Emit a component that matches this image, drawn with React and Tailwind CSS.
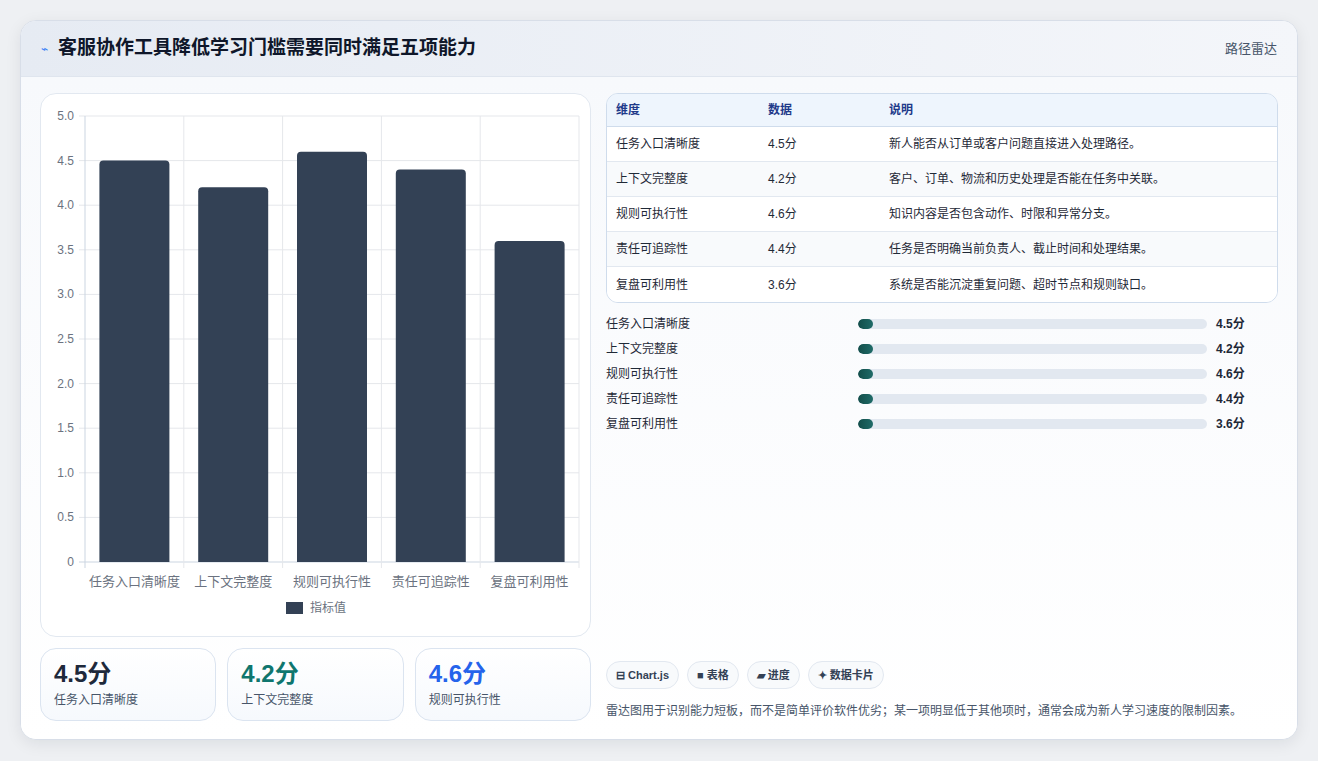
import React from "react";

const cats = ["任务入口清晰度", "上下文完整度", "规则可执行性", "责任可追踪性", "复盘可利用性"];
const vals = [4.5, 4.2, 4.6, 4.4, 3.6];
const descs = [
  "新人能否从订单或客户问题直接进入处理路径。",
  "客户、订单、物流和历史处理是否能在任务中关联。",
  "知识内容是否包含动作、时限和异常分支。",
  "任务是否明确当前负责人、截止时间和处理结果。",
  "系统是否能沉淀重复问题、超时节点和规则缺口。",
];

function Chart() {
  const L = 44, R = 538, T = 22, B = 468;
  const cw = (R - L) / 5;
  const ticks = [0, 0.5, 1, 1.5, 2, 2.5, 3, 3.5, 4, 4.5, 5];
  const y = (v) => B - (v / 5) * (B - T);
  return (
    <svg width="550" height="541" style={{ fontFamily: '"Liberation Sans","Noto Sans CJK SC",sans-serif' }}>
      {ticks.map((t) => (
        <g key={t}>
          <line x1={L - 6} x2={R} y1={y(t)} y2={y(t)} stroke={t === 0 ? "#cbd5e1" : "#e5e7eb"} />
          <text x={L - 11} y={y(t) + 4} textAnchor="end" fontSize="12" fill="#6b7280">
            {t === 0 ? "0" : t.toFixed(1)}
          </text>
        </g>
      ))}
      {[0, 1, 2, 3, 4, 5].map((i) => (
        <line key={i} x1={L + i * cw} x2={L + i * cw} y1={T} y2={B + 6} stroke={i === 0 ? "#cbd5e1" : "#e5e7eb"} />
      ))}
      {vals.map((v, i) => {
        const cx = L + cw * i + cw / 2;
        const top = y(v);
        return (
          <path key={i} d={`M${cx - 35} ${B} V${top + 4} Q${cx - 35} ${top} ${cx - 31} ${top} H${cx + 31} Q${cx + 35} ${top} ${cx + 35} ${top + 4} V${B} Z`} fill="#334155" />
        );
      })}
      {cats.map((c, i) => (
        <text key={c} x={L + cw * i + cw / 2} y={492} textAnchor="middle" fontSize="13" fill="#6b7280">{c}</text>
      ))}
      <rect x="245" y="508" width="17" height="12" fill="#334155" />
      <text x="269" y="518" fontSize="12" fill="#6b7280">指标值</text>
    </svg>
  );
}

export default function App() {
  return (
    <div className="w-[1318px] h-[761px] bg-[#eef0f3] pt-[20px] pl-[20px]" style={{ fontFamily: '"Liberation Sans","Noto Sans CJK SC",sans-serif' }}>
      <div className="w-[1278px] h-[720px] bg-white rounded-2xl border border-[#d8dee8] shadow-[0_4px_16px_rgba(15,23,42,0.08)] overflow-hidden flex flex-col">
        <div className="h-[56px] shrink-0 bg-gradient-to-r from-[#e6ebf3] to-[#f4f6fa] border-b border-[#dfe5ee] flex items-center justify-between px-[20px]">
          <div className="flex items-center gap-[10px]">
            <span className="text-[#3b82f6] text-[12px]">⌁</span>
            <span className="text-[19px] font-bold text-[#0f172a]">客服协作工具降低学习门槛需要同时满足五项能力</span>
          </div>
          <span className="text-[13px] text-[#475569]">路径雷达</span>
        </div>
        <div className="flex-1 bg-gradient-to-b from-[#f7f9fc] to-white px-[19px] pt-[16px] flex gap-[15px]">
          <div className="w-[551px] flex flex-col gap-[11px]">
            <div className="h-[544px] bg-white rounded-2xl border border-[#e2e8f0]">
              <Chart />
            </div>
            <div className="grid grid-cols-3 gap-[11px]">
              {[["4.5分", "text-[#1e293b]", cats[0]], ["4.2分", "text-[#0f766e]", cats[1]], ["4.6分", "text-[#2563eb]", cats[2]]].map(([v, c, l]) => (
                <div key={l} className="h-[73px] rounded-2xl border border-[#dbe4f0] bg-gradient-to-b from-white to-[#f6f9fd] px-[13px] pt-[11px]">
                  <div className={`text-[24px] font-bold leading-[28px] ${c}`}>{v}</div>
                  <div className="text-[12px] text-[#475569] mt-[3px]">{l}</div>
                </div>
              ))}
            </div>
          </div>
          <div className="w-[673px] flex flex-col">
            <div className="rounded-xl border border-[#cfdcec] overflow-hidden">
              <div className="h-[33px] bg-[#eef5fd] border-b border-[#cfdcec] flex items-center text-[12px] font-bold text-[#1e3a8a]">
                <span className="w-[161px] pl-[9px]">维度</span>
                <span className="w-[121px]">数据</span>
                <span>说明</span>
              </div>
              {cats.map((c, i) => (
                <div key={c} className={`h-[35px] flex items-center text-[12px] text-[#1f2937] ${i % 2 ? "bg-[#f8fafc]" : "bg-white"} ${i < 4 ? "border-b border-[#e2e8f0]" : ""}`}>
                  <span className="w-[161px] pl-[9px]">{c}</span>
                  <span className="w-[121px]">{vals[i]}分</span>
                  <span>{descs[i]}</span>
                </div>
              ))}
            </div>
            <div className="mt-[8px] flex flex-col">
              {cats.map((c, i) => (
                <div key={c} className="h-[25px] flex items-center text-[12px] text-[#1f2937]">
                  <span className="w-[252px]">{c}</span>
                  <div className="w-[349px] h-[10px] rounded-full bg-[#e2e8f0] overflow-hidden">
                    <div className="h-full w-[15px] rounded-full bg-gradient-to-r from-[#134e4a] to-[#1f6b68]" />
                  </div>
                  <span className="ml-[9px] font-bold">{vals[i]}分</span>
                </div>
              ))}
            </div>
            <div className="mt-auto mb-[18px]">
              <div className="flex gap-[8px]">
                {["⊟ Chart.js", "■ 表格", "▰ 进度", "✦ 数据卡片"].map((t) => (
                  <span key={t} className="h-[28px] px-[9px] rounded-full border border-[#e2e8f0] bg-[#f8fafc] text-[11px] font-bold text-[#334155] flex items-center">{t}</span>
                ))}
              </div>
              <p className="mt-[12px] text-[12px] leading-[20px] text-[#475569]">
                雷达图用于识别能力短板，而不是简单评价软件优劣；某一项明显低于其他项时，通常会成为新人学习速度的限制因素。
              </p>
            </div>
          </div>
        </div>
      </div>
    </div>
  );
}
